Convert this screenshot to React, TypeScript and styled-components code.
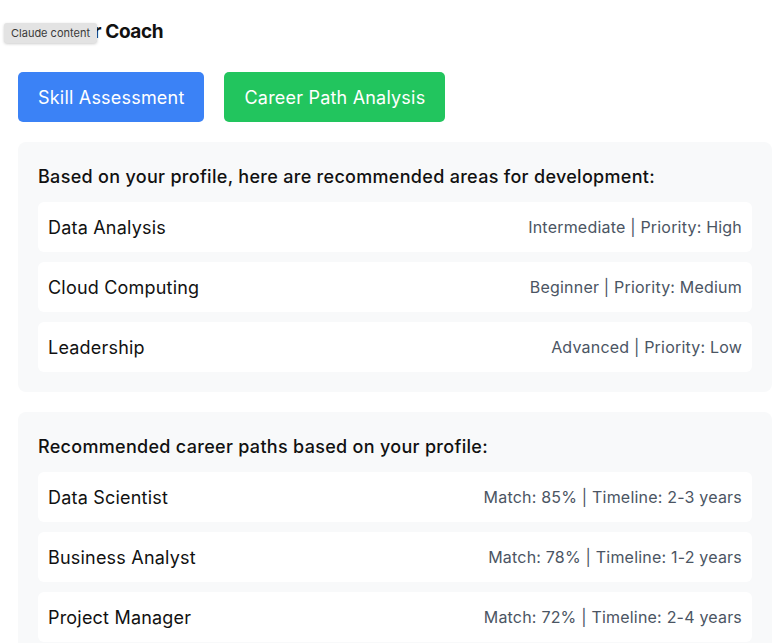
import styled, { createGlobalStyle } from 'styled-components';

const GlobalStyle = createGlobalStyle`
  html, body {
    margin: 0;
    padding: 0;
    background: #ffffff;
    font-family: Inter, "Noto Sans", "Liberation Sans", sans-serif;
    color: #111111;
  }
  * { box-sizing: border-box; }
`;

const Page = styled.div`
  position: relative;
  padding: 20px 5px 20px 18px;
`;

const Title = styled.h1`
  margin: 0 0 28px;
  font-size: 19px;
  line-height: 24px;
  font-weight: 700;
  letter-spacing: -0.4px;
`;

const Tooltip = styled.div`
  position: absolute;
  left: 4px;
  top: 23px;
  height: 20px;
  padding: 0 7px;
  display: flex;
  align-items: center;
  background: #e3e3e3;
  border-radius: 3px;
  box-shadow: 0 1px 3px rgba(0, 0, 0, 0.2);
  font-size: 11px;
  color: #3a3a3a;
`;

const Tabs = styled.div`
  display: flex;
  gap: 20px;
  margin-bottom: 20px;
`;

const TabButton = styled.button<{ $color: string }>`
  height: 50px;
  padding: 0 20px;
  border: none;
  border-radius: 5px;
  background: ${p => p.$color};
  color: #ffffff;
  font-family: inherit;
  font-size: 18px;
  letter-spacing: 0.2px;
  cursor: pointer;
`;

const Card = styled.section`
  background: #f8f9fa;
  border-radius: 8px;
  padding: 20px;
  margin-bottom: 20px;
  display: flex;
  flex-direction: column;
  gap: 10px;
`;

const CardHeading = styled.h2`
  margin: 0;
  font-size: 18px;
  line-height: 30px;
  font-weight: 500;
  letter-spacing: 0.3px;
`;

const Row = styled.div`
  height: 50px;
  padding: 0 10px;
  background: #ffffff;
  border-radius: 6px;
  display: flex;
  align-items: center;
  justify-content: space-between;
`;

const RowName = styled.span`
  font-size: 18px;
  letter-spacing: 0.2px;
`;

const RowMeta = styled.span`
  font-size: 16px;
  letter-spacing: 0.2px;
  color: #4b5563;
`;

const skills = [
  { name: 'Data Analysis', level: 'Intermediate', priority: 'High' },
  { name: 'Cloud Computing', level: 'Beginner', priority: 'Medium' },
  { name: 'Leadership', level: 'Advanced', priority: 'Low' },
];

const paths = [
  { title: 'Data Scientist', match: 85, timeline: '2-3 years' },
  { title: 'Business Analyst', match: 78, timeline: '1-2 years' },
  { title: 'Project Manager', match: 72, timeline: '2-4 years' },
];

export default function App() {
  return (
    <Page>
      <GlobalStyle />
      <Title>AI Career Coach</Title>
      <Tooltip>Claude content</Tooltip>
      <Tabs>
        <TabButton $color="#3b82f6">Skill Assessment</TabButton>
        <TabButton $color="#22c55e">Career Path Analysis</TabButton>
      </Tabs>
      <Card>
        <CardHeading>Based on your profile, here are recommended areas for development:</CardHeading>
        {skills.map(s => (
          <Row key={s.name}>
            <RowName>{s.name}</RowName>
            <RowMeta>{s.level} | Priority: {s.priority}</RowMeta>
          </Row>
        ))}
      </Card>
      <Card>
        <CardHeading>Recommended career paths based on your profile:</CardHeading>
        {paths.map(p => (
          <Row key={p.title}>
            <RowName>{p.title}</RowName>
            <RowMeta>Match: {p.match}% | Timeline: {p.timeline}</RowMeta>
          </Row>
        ))}
      </Card>
    </Page>
  );
}
